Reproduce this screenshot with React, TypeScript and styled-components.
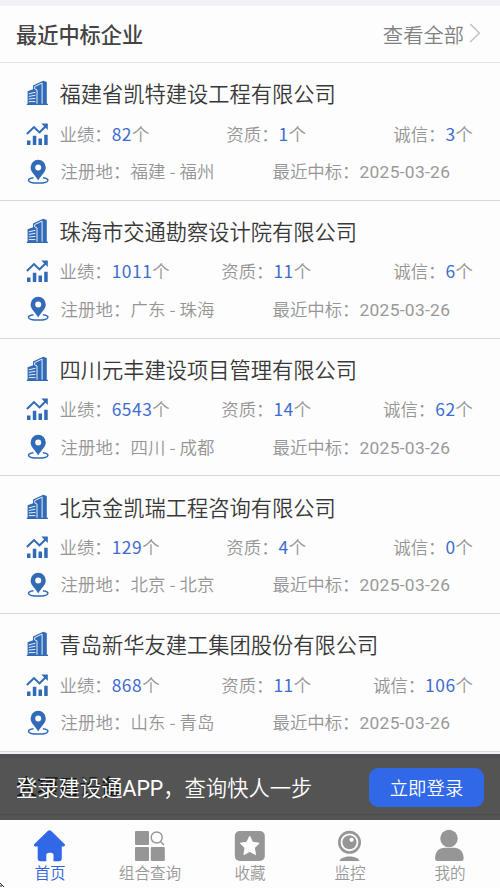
import React from "react";
import styled, { createGlobalStyle } from "styled-components";

const GlobalStyle = createGlobalStyle`
  * { box-sizing: border-box; }
  body {
    margin: 0;
    background: #fdfdfd;
    font-family: "Noto Sans CJK SC", sans-serif;
    overflow: hidden;
  }
`;

const Screen = styled.div`
  position: relative;
  width: 500px;
  height: 888px;
  overflow: hidden;
  background: #fdfdfd;
`;

const Divider = styled.div`
  height: 6px;
  background: #f1f1f7;
`;

const SectionHeader = styled.header`
  display: flex;
  align-items: center;
  justify-content: space-between;
  height: 57px;
  padding: 0 19px 0 16px;
  border-bottom: 1px solid #e4e4e4;
`;

const SectionTitle = styled.h2`
  margin: 0;
  font-size: 21.2px;
  line-height: 30px;
  font-weight: 500;
  color: #444;
`;

const MoreLink = styled.a`
  display: flex;
  align-items: center;
  gap: 5px;
  font-size: 20.3px;
  line-height: 30px;
  font-weight: 350;
  color: #808080;
`;

const Card = styled.article`
  display: grid;
  grid-template-columns: 33.5px 1fr;
  grid-template-rows: 42.5px 38px 38px;
  align-items: center;
  height: 137.8px;
  padding: 9px 27px 0 26px;
  border-bottom: 1px solid #d8d8d8;
`;

const CompanyName = styled.h3`
  margin: 0;
  font-size: 21.25px;
  line-height: 30px;
  font-weight: 350;
  color: #383838;
  white-space: nowrap;
`;

const StatRow = styled.div`
  display: grid;
  grid-template-columns: repeat(3, 1fr);
  font-size: 17.4px;
  line-height: 26px;
  font-weight: 350;
  color: #959595;
  white-space: nowrap;
`;

const Stat = styled.span<{ $align: "left" | "center" | "right" }>`
  text-align: ${(p) => p.$align};
`;

const Count = styled.span`
  font-weight: 400;
  letter-spacing: 0.5px;
  color: #3d6cd0;
`;

const InfoRow = styled.div`
  display: grid;
  grid-template-columns: 212px 1fr;
  padding-left: 1px;
  font-size: 17.4px;
  line-height: 26px;
  font-weight: 350;
  color: #959595;
  white-space: nowrap;
`;

const Place = styled.span`
  letter-spacing: 0.1px;
`;

const DateText = styled.span`
  font-family: Roboto, sans-serif;
  font-weight: 400;
  letter-spacing: 0.3px;
  color: #999;
`;

const LoginBar = styled.div`
  position: absolute;
  left: 0;
  right: 0;
  bottom: 68px;
  height: 66px;
  display: flex;
  align-items: center;
  justify-content: space-between;
  padding: 0 16px;
  background: rgba(0, 0, 0, 0.67);
  color: #fff;
  font-size: 21.3px;
`;

const LoginText = styled.span`
  padding-top: 2px;
  font-weight: 350;
  line-height: 30px;
  white-space: nowrap;
`;

const Latin = styled.span`
  font-family: Roboto, sans-serif;
  font-weight: 400;
`;

const LoginButton = styled.button`
  width: 115px;
  height: 39px;
  padding: 0;
  border: 0;
  border-radius: 9px;
  background: #3168e8;
  color: #fff;
  font: 350 18.4px/38px "Noto Sans CJK SC", sans-serif;
`;

const TabBar = styled.nav`
  position: absolute;
  left: 0;
  right: 0;
  bottom: 0;
  height: 68px;
  display: grid;
  grid-template-columns: repeat(5, 1fr);
  background: #fdfdfd;
`;

const Tab = styled.a<{ $active?: boolean }>`
  display: flex;
  flex-direction: column;
  align-items: center;
  padding-top: 9px;
  color: ${(p) => (p.$active ? "#3164dc" : "#999")};
  svg { display: block; }
`;

const TabLabel = styled.span`
  margin-top: -2px;
  font-size: 15.6px;
  line-height: 22px;
  font-weight: 350;
`;

const CornerMark = styled.svg`
  position: absolute;
  left: 0;
  bottom: 0;
`;

const Chevron = () => (
  <svg width="12" height="22" viewBox="0 0 12 22" fill="none" stroke="#bdbdbd" strokeWidth="1.3">
    <path d="M1.2 1 10.4 10 1.2 19" />
  </svg>
);

const BuildingIcon = () => (
  <svg width="23" height="26" viewBox="0 0 23 26" fill="#316bb8">
    <path d="M7 9.2V5.6L17.2.8 20.8 2v21.8h1.2v1.1H.8v-1.1h.8V11.3L7 9.2Z" />
    <path d="m8.6 8.8.1-2.2 7.4-3.5v20.6M8.6 8.8l2.4 1.1v13.9M2.8 13.8l6.6-1.5M2.8 16.4l6.6-1.1M2.8 19l6.6-.6M2.8 21.6h6.6" fill="none" stroke="#fdfdfd" strokeWidth=".9" />
  </svg>
);

const ChartIcon = () => (
  <svg width="23" height="24" viewBox="0 0 23 24" fill="#316bb8">
    <path d="M.9 12 8 5.1l5.5 5.3 6.7-6.7" fill="none" stroke="#316bb8" strokeWidth="2.1" />
    <path d="M15.3 1.5h6.5v6.4ZM1 18.5h3.5V23H1ZM6.8 13.8h3.5V23H6.8ZM12.5 16.4H16V23h-3.5ZM18.2 12.7h3.5V23h-3.5Z" />
  </svg>
);

const PinIcon = () => (
  <svg width="24" height="26" viewBox="0 0 24 26" fill="#316bb8">
    <path fillRule="evenodd" d="M12.2.8a7.6 7.6 0 0 0-7.6 7.6c0 5 5.3 8.2 7.6 13.1 2.3-4.9 7.6-8.1 7.6-13.1A7.6 7.6 0 0 0 12.2.8Zm0 4.6a3 3 0 1 1 0 6 3 3 0 0 1 0-6Z" />
    <path d="M7.5 18.7c-3.2.4-5 1.3-5 2.5 0 1.8 4.2 2.9 9.7 2.9s9.7-1.1 9.7-2.9c0-1.2-1.8-2.1-5-2.5" fill="none" stroke="#316bb8" strokeWidth="1.5" />
  </svg>
);

const HomeIcon = () => (
  <svg width="34" height="34" viewBox="0 0 34 34" fill="#3168e8">
    <path d="M15 1.8c1-.9 2-.9 3 0L31.5 15.1c1 1.2.7 2.3-.9 2.3h-1.8v11.9a3 3 0 0 1-3 3h-5.3v-6.5c0-2.6-7.2-2.6-7.2 0v6.5H7.7a3 3 0 0 1-3-3V17.4H2.2c-1.6 0-1.9-1.1-.8-2.3Z" />
  </svg>
);

const GridSearchIcon = () => (
  <svg width="34" height="34" viewBox="0 0 34 34" fill="#969696">
    <rect x="2" y="2" width="14" height="14" rx="1" />
    <rect x="2" y="18" width="14" height="14" rx="1" />
    <rect x="17.8" y="18" width="14" height="14" rx="1" />
    <path d="M27.7 12.7 31 16M29.2 8.5a5.5 5.5 0 1 1-11 0 5.5 5.5 0 0 1 11 0Z" fill="none" stroke="#969696" strokeWidth="1.4" />
  </svg>
);

const StarIcon = () => (
  <svg width="34" height="34" viewBox="0 0 34 34" fill="#969696">
    <rect x="1.8" y="2" width="30" height="30" rx="5" />
    <path d="m16.7 7.2 2.9 6.1 6.5.9-4.7 4.7 1.1 6.7-5.8-3.2-5.8 3.2 1.1-6.7-4.7-4.7 6.5-.9Z" fill="#fdfdfd" stroke="#fdfdfd" strokeLinejoin="round" />
  </svg>
);

const CameraIcon = () => (
  <svg width="34" height="34" viewBox="0 0 34 34" fill="#969696">
    <circle cx="16.5" cy="13.3" r="10.2" fill="none" stroke="#969696" strokeWidth="2.6" />
    <circle cx="16.5" cy="13.3" r="7" />
    <circle cx="18.6" cy="10.8" r="2.1" fill="#fdfdfd" />
    <path d="M6.5 31.9c1.3-6 18.7-6 20 0Z" />
  </svg>
);

const PersonIcon = () => (
  <svg width="34" height="34" viewBox="0 0 34 34" fill="#969696">
    <circle cx="16" cy="9.5" r="8.7" />
    <path d="M2.1 29.5c0-7 4.1-10.7 9.7-10.7h9.1c5.6 0 9.7 3.7 9.7 10.7 0 1.7-.8 2.5-2.5 2.5H4.6c-1.7 0-2.5-.8-2.5-2.5Z" />
  </svg>
);

const companies = [
  { name: "福建省凯特建设工程有限公司", works: 82, certs: 1, credit: 3, place: "福建 - 福州" },
  { name: "珠海市交通勘察设计院有限公司", works: 1011, certs: 11, credit: 6, place: "广东 - 珠海" },
  { name: "四川元丰建设项目管理有限公司", works: 6543, certs: 14, credit: 62, place: "四川 - 成都" },
  { name: "北京金凯瑞工程咨询有限公司", works: 129, certs: 4, credit: 0, place: "北京 - 北京" },
  { name: "青岛新华友建工集团股份有限公司", works: 868, certs: 11, credit: 106, place: "山东 - 青岛" },
];

const tabs = [
  { label: "首页", icon: <HomeIcon />, active: true },
  { label: "组合查询", icon: <GridSearchIcon /> },
  { label: "收藏", icon: <StarIcon /> },
  { label: "监控", icon: <CameraIcon /> },
  { label: "我的", icon: <PersonIcon /> },
];

export default function App() {
  return (
    <Screen>
      <GlobalStyle />
      <Divider />
      <SectionHeader>
        <SectionTitle>最近中标企业</SectionTitle>
        <MoreLink>查看全部<Chevron /></MoreLink>
      </SectionHeader>
      {companies.map((c) => (
        <Card key={c.name}>
          <BuildingIcon />
          <CompanyName>{c.name}</CompanyName>
          <ChartIcon />
          <StatRow>
            <Stat $align="left">业绩：<Count>{c.works}</Count>个</Stat>
            <Stat $align="center">资质：<Count>{c.certs}</Count>个</Stat>
            <Stat $align="right">诚信：<Count>{c.credit}</Count>个</Stat>
          </StatRow>
          <PinIcon />
          <InfoRow>
            <Place>注册地：{c.place}</Place>
            <span>最近中标：<DateText>2025-03-26</DateText></span>
          </InfoRow>
        </Card>
      ))}
      <Divider />
      <SectionHeader>
        <SectionTitle>大项目设备</SectionTitle>
      </SectionHeader>
      <LoginBar>
        <LoginText>登录建设通<Latin>APP</Latin>，查询快人一步</LoginText>
        <LoginButton>立即登录</LoginButton>
      </LoginBar>
      <TabBar>
        {tabs.map((t) => (
          <Tab key={t.label} $active={t.active}>
            {t.icon}
            <TabLabel>{t.label}</TabLabel>
          </Tab>
        ))}
      </TabBar>
      <CornerMark width="5" height="5" viewBox="0 0 5 5">
        <path d="M0 0 4 4M0 3h2" stroke="#222" strokeWidth="1" />
      </CornerMark>
    </Screen>
  );
}
